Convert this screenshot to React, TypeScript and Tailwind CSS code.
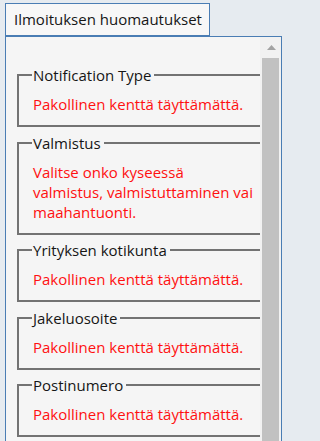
import React from "react";

type Notice = {
  field: string;
  message: string;
};

const notices: Notice[] = [
  { field: "Notification Type", message: "Pakollinen kenttä täyttämättä." },
  {
    field: "Valmistus",
    message: "Valitse onko kyseessä valmistus, valmistuttaminen vai maahantuonti.",
  },
  { field: "Yrityksen kotikunta", message: "Pakollinen kenttä täyttämättä." },
  { field: "Jakeluosoite", message: "Pakollinen kenttä täyttämättä." },
  { field: "Postinumero", message: "Pakollinen kenttä täyttämättä." },
];

export default function App() {
  return (
    <div
      className="h-[441px] w-full overflow-hidden bg-[#e6ebf0] pl-[5px] pt-[3px] text-[15px] text-[#151515]"
      style={{ fontFamily: '"Open Sans", "Noto Sans", sans-serif' }}
    >
      <div className="inline-block border border-[#4a7db4] bg-[#f7f7f7] pl-[8px] pr-[7px] pt-[5px] pb-[6px] leading-[20px]">
        Ilmoituksen huomautukset
      </div>

      <div className="flex h-[420px] w-[277px] border border-[#4a7db4] bg-[#f5f5f5]">
        <div className="min-w-0 flex-1 overflow-hidden pt-[28px]">
          {notices.map((n) => (
            <NoticeBox key={n.field} notice={n} />
          ))}
        </div>

        <div className="flex w-[21px] shrink-0 flex-col bg-[#f1f1f1]">
          <div className="flex h-[21px] items-center justify-center pl-[1px]">
            <svg width="9" height="5" viewBox="0 0 9 5">
              <path d="M0 5 L4.5 0 L9 5 Z" fill="#a3a3a3" />
            </svg>
          </div>
          <div className="mx-[2px] flex-1 bg-[#c1c1c1]" />
        </div>
      </div>
    </div>
  );
}

function NoticeBox({ notice }: { notice: Notice }) {
  return (
    <fieldset className="mb-[5.5px] ml-[11px] w-[300px] border-2 border-[#737373] pb-[11px] pl-[14px] pr-[60px]">
      <legend className="-ml-px pl-px pr-[3px] leading-[20px]">
        {notice.field}
      </legend>
      <p className="w-[221px] pt-[9px] leading-[20px] text-[#ff1010]">
        {notice.message}
      </p>
    </fieldset>
  );
}
